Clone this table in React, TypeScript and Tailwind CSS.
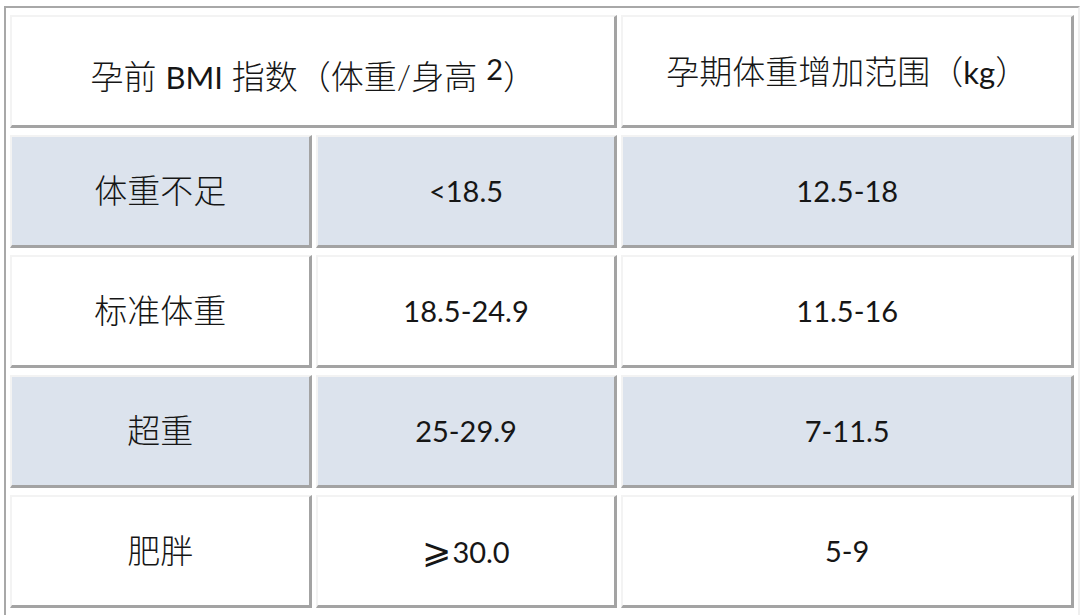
import React from "react";

const rows = [
  { a: "体重不足", b: "<18.5", c: "12.5-18", blue: true },
  { a: "标准体重", b: "18.5-24.9", c: "11.5-16", blue: false },
  { a: "超重", b: "25-29.9", c: "7-11.5", blue: true },
  { a: "肥胖", b: "≥30.0", c: "5-9", blue: false },
];

const cell =
  "p-0 text-center align-middle border-t-2 border-l-2 border-r-[3px] border-b-[3px] border-t-[#f3f3f3] border-l-[#f3f3f3] border-r-[#a3a3a3] border-b-[#a3a3a3]";

function Val({ v }: { v: string }) {
  if (v.startsWith("≥")) {
    return (
      <span>
        <span className="font-['DejaVu_Sans','Noto_Sans_CJK_SC',sans-serif] text-[35px] font-light mr-[1px]">⩾</span>
        {v.slice(1)}
      </span>
    );
  }
  return <span>{v}</span>;
}

export default function App() {
  return (
    <div className="w-[1080px] h-[615px] bg-white overflow-hidden">
      <div className="pt-[6px] pl-[4px]">
        <table className="border-separate border-spacing-x-[4px] border-spacing-y-[7px] border-t-2 border-l-2 border-r-2 border-b-2 border-t-[#a8a8a8] border-l-[#a8a8a8] border-r-[#efefef] border-b-[#efefef] text-[#161616] font-['Lato','Noto_Sans_CJK_SC',sans-serif]">
          <tbody>
            <tr>
              <td colSpan={2} className={`${cell} h-[113px] pt-[6px] bg-white text-[33px] font-light`}>
                孕前 <span className="font-normal text-[31px]">BMI</span> 指数（体重/身高 <span className="align-[9px] text-[29px] font-normal">2</span>）
              </td>
              <td className={`${cell} w-[453px] h-[113px] pt-[2px] bg-white text-[33px] font-light`}>
                孕期体重增加范围（<span className="text-[31px] font-normal">kg</span>）
              </td>
            </tr>
            {rows.map((r) => (
              <tr key={r.a}>
                <td className={`${cell} w-[302px] h-[113px] text-[33px] font-light ${r.blue ? "bg-[#dce3ed]" : "bg-white"}`}>
                  {r.a}
                </td>
                <td className={`${cell} w-[302px] h-[113px] text-[29px] ${r.blue ? "bg-[#dce3ed]" : "bg-white"}`}>
                  <Val v={r.b} />
                </td>
                <td className={`${cell} w-[453px] h-[113px] text-[29px] ${r.blue ? "bg-[#dce3ed]" : "bg-white"}`}>
                  {r.c}
                </td>
              </tr>
            ))}
          </tbody>
        </table>
      </div>
    </div>
  );
}
